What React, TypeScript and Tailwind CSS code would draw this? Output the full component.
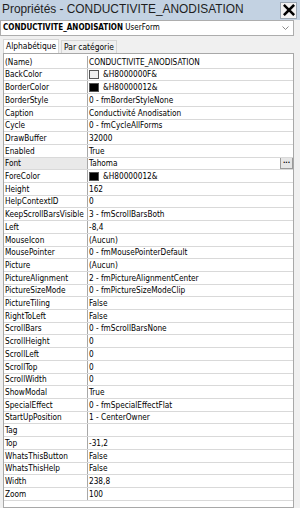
const rows: { name: string; value: string; swatch?: "light" | "dark"; selected?: boolean }[] = [
  { name: "(Name)", value: "CONDUCTIVITE_ANODISATION" },
  { name: "BackColor", value: "&H8000000F&", swatch: "light" },
  { name: "BorderColor", value: "&H80000012&", swatch: "dark" },
  { name: "BorderStyle", value: "0 - fmBorderStyleNone" },
  { name: "Caption", value: "Conductivité Anodisation" },
  { name: "Cycle", value: "0 - fmCycleAllForms" },
  { name: "DrawBuffer", value: "32000" },
  { name: "Enabled", value: "True" },
  { name: "Font", value: "Tahoma", selected: true },
  { name: "ForeColor", value: "&H80000012&", swatch: "dark" },
  { name: "Height", value: "162" },
  { name: "HelpContextID", value: "0" },
  { name: "KeepScrollBarsVisible", value: "3 - fmScrollBarsBoth" },
  { name: "Left", value: "-8,4" },
  { name: "MouseIcon", value: "(Aucun)" },
  { name: "MousePointer", value: "0 - fmMousePointerDefault" },
  { name: "Picture", value: "(Aucun)" },
  { name: "PictureAlignment", value: "2 - fmPictureAlignmentCenter" },
  { name: "PictureSizeMode", value: "0 - fmPictureSizeModeClip" },
  { name: "PictureTiling", value: "False" },
  { name: "RightToLeft", value: "False" },
  { name: "ScrollBars", value: "0 - fmScrollBarsNone" },
  { name: "ScrollHeight", value: "0" },
  { name: "ScrollLeft", value: "0" },
  { name: "ScrollTop", value: "0" },
  { name: "ScrollWidth", value: "0" },
  { name: "ShowModal", value: "True" },
  { name: "SpecialEffect", value: "0 - fmSpecialEffectFlat" },
  { name: "StartUpPosition", value: "1 - CenterOwner" },
  { name: "Tag", value: "" },
  { name: "Top", value: "-31,2" },
  { name: "WhatsThisButton", value: "False" },
  { name: "WhatsThisHelp", value: "False" },
  { name: "Width", value: "238,8" },
  { name: "Zoom", value: "100" },
];

export default function App() {
  return (
    <div className="w-[300px] h-[508px] overflow-hidden flex flex-col bg-[#f0f0f0] font-['DejaVu_Sans_Condensed','Liberation_Sans',sans-serif] text-black">
      {/* title bar */}
      <div className="h-[20px] shrink-0 flex items-center justify-between bg-[#c3d2e2] pl-[2px] pr-[3px] font-['Liberation_Sans',Arial,sans-serif]">
        <span className="text-[11.9px] text-[#1e1e1e] leading-none">Propriétés - CONDUCTIVITE_ANODISATION</span>
        <div className="w-[17px] h-[17px] flex items-center justify-center bg-[#f2f2f2] border border-[#9aa6b2]">
          <svg width="12" height="12" viewBox="0 0 12 12">
            <path d="M1.8 1.8 L10.2 10.2 M10.2 1.8 L1.8 10.2" stroke="#000" strokeWidth="2.6" strokeLinecap="square" />
          </svg>
        </div>
      </div>

      {/* object selector */}
      <div className="h-[16px] shrink-0 mr-[6px] flex items-center justify-between bg-white border border-[#adadad] pl-[2px] pr-[4px]">
        <span className="text-[8px] leading-none whitespace-nowrap">
          <b>CONDUCTIVITE_ANODISATION</b> UserForm
        </span>
        <svg width="7" height="5" viewBox="0 0 7 5">
          <path d="M0.5 0.5 L3.5 3.5 L6.5 0.5" fill="none" stroke="#8a8a8a" strokeWidth="1" />
        </svg>
      </div>

      {/* tabs */}
      <div className="h-[17px] shrink-0 flex items-end pl-[3px] gap-[2px] text-[8.4px]">
        <div className="h-[14px] px-[2px] flex items-center bg-white border border-b-0 border-[#d6d6d6]">Alphabétique</div>
        <div className="h-[13px] px-[2px] flex items-center bg-[#f0f0f0] border border-b-0 border-[#d6d6d6]">Par catégorie</div>
      </div>

      {/* property grid */}
      <div className="flex-1 ml-[3px] mr-[6px] bg-white border border-[#a8a8a8] pt-[2px] text-[8.2px]">
        {rows.map((r) => (
          <div key={r.name} className="h-[12.71px] flex border-b border-[#d9d9d9]">
            <div
              className={`w-[84px] shrink-0 pl-[1px] flex items-center border-r border-[#a8a8a8] whitespace-nowrap overflow-hidden ${
                r.selected ? "bg-[#e9e9e9]" : ""
              }`}
            >
              {r.name}
            </div>
            <div className="flex-1 pl-[1px] flex items-center whitespace-nowrap overflow-hidden">
              {r.swatch && (
                <span
                  className={`w-[10px] h-[9px] mr-[4px] shrink-0 border border-[#555] ${
                    r.swatch === "dark" ? "bg-black" : "bg-[#f0f0f0]"
                  }`}
                />
              )}
              <span className="flex-1">{r.value}</span>
              {r.selected && (
                <span className="w-[13px] h-[12px] flex items-center justify-center bg-[#e6e6e6] border border-[#9a9a9a] text-[7px] font-bold leading-none pb-[3px]">
                  ...
                </span>
              )}
            </div>
          </div>
        ))}
      </div>
    </div>
  );
}
